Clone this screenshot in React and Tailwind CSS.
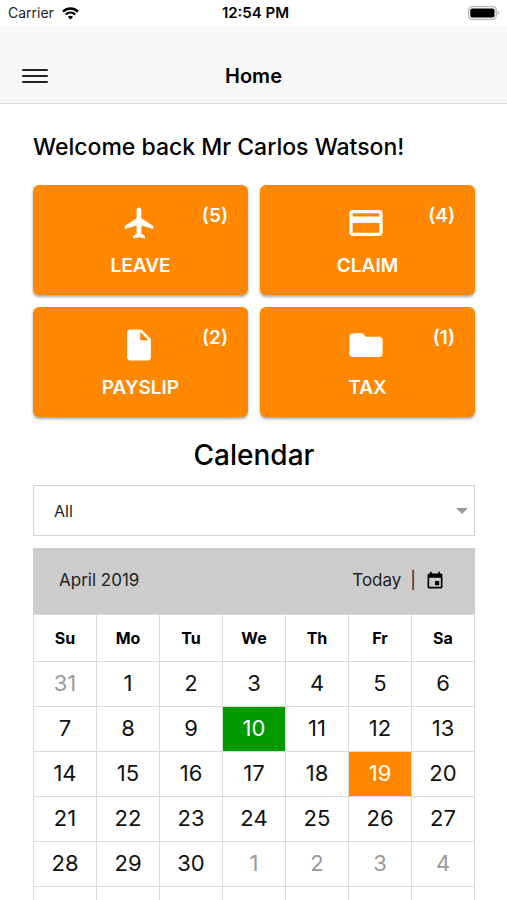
import { useState } from "react";
import { IoMdAirplane, IoMdCard, IoMdDocument, IoMdFolder } from "react-icons/io";
import { MdEvent } from "react-icons/md";

const TILES = [
  { label: "LEAVE", count: 5, icon: IoMdAirplane },
  { label: "CLAIM", count: 4, icon: IoMdCard },
  { label: "PAYSLIP", count: 2, icon: IoMdDocument },
  { label: "TAX", count: 1, icon: IoMdFolder },
];

const DAYS = ["Su", "Mo", "Tu", "We", "Th", "Fr", "Sa"];

// April 2019 starts on a Monday, so the grid starts on Sunday 31 March
const WEEKS = Array.from({ length: 6 }, (_, week) =>
  Array.from({ length: 7 }, (_, day) => {
    const n = week * 7 + day;
    if (n === 0) return { day: 31, outside: true };
    if (n > 30) return { day: n - 30, outside: true };
    return { day: n, outside: false };
  })
);

function cellStyle({ day, outside }) {
  if (outside) return "text-[#999999]";
  if (day === 10) return "bg-[#009900] text-white";
  if (day === 19) return "bg-[#ff8800] text-white";
  return "text-[#111111]";
}

function StatusBar() {
  return (
    <div className="grid h-[26px] shrink-0 grid-cols-3 items-center bg-white px-2 text-sm text-[#222222]">
      <div className="flex items-center gap-2">
        <span>Carrier</span>
        <svg viewBox="0 0 17 13" className="h-[13px] w-[17px]" fill="none" stroke="#000">
          <path d="M1 4.6c4.3-4.1 10.7-4.1 15 0" strokeWidth="2.4" />
          <path d="M3.7 7.5c2.8-2.6 6.8-2.6 9.6 0" strokeWidth="2.2" />
          <path d="M8.5 12.6 5.9 9.9c1.5-1.4 3.7-1.4 5.2 0z" fill="#000" stroke="none" />
        </svg>
      </div>
      <span className="pl-1 text-center text-[15px] font-semibold text-black">12:54 PM</span>
      <svg viewBox="0 0 32 14" className="h-[14px] w-8 justify-self-end">
        <rect x="1.6" y="0.7" width="27.6" height="12.6" rx="3.6" fill="#fff" stroke="#b5b5b5" strokeWidth="1.2" />
        <rect x="3.3" y="2.4" width="24.2" height="9.2" rx="1.8" fill="#000" />
        <path d="M30.6 5v4c1.5-.5 1.5-3.5 0-4z" fill="#999" />
      </svg>
    </div>
  );
}

function Tile({ label, count, icon: Icon }) {
  return (
    <button
      type="button"
      className="relative flex h-[110px] flex-col items-center rounded-md bg-[#ff8800] pt-[19px] text-[19px] leading-7 font-semibold text-white shadow-[0_2px_3px_rgba(0,0,0,0.35)]"
    >
      <Icon className="mr-1 size-[38px]" />
      <span className="mt-[10px]">{label}</span>
      <span className="absolute top-[17px] right-5">({count})</span>
    </button>
  );
}

export default function App() {
  const [filter, setFilter] = useState("all");

  return (
    <div className="flex h-screen flex-col overflow-hidden bg-white font-['Inter',sans-serif] text-black">
      <StatusBar />

      {/* Nav bar */}
      <header className="grid h-[78px] shrink-0 grid-cols-[1fr_auto_1fr] items-end border-b border-[#d9d9d9] bg-[#f7f7f7] px-[22px] pb-3">
        <button type="button" aria-label="Menu" className="flex h-[30px] w-[26px] flex-col justify-center gap-1">
          <span className="h-[2px] w-full rounded-full bg-[#222222]" />
          <span className="h-[2px] w-full rounded-full bg-[#222222]" />
          <span className="h-[2px] w-full rounded-full bg-[#222222]" />
        </button>
        <h1 className="text-xl leading-[30px] font-semibold">Home</h1>
      </header>

      <main className="flex-1 overflow-y-auto pt-[27px] pr-8 pl-[33px] [scrollbar-width:none]">
        <h2 className="text-[23px] leading-8 font-medium">Welcome back Mr Carlos Watson!</h2>

        <div className="mt-[22px] grid grid-cols-2 gap-3">
          {TILES.map((tile) => (
            <Tile key={tile.label} {...tile} />
          ))}
        </div>

        {/* Calendar */}
        <h2 className="mt-5 text-center text-[28px] leading-9 font-medium">Calendar</h2>

        <div className="relative mt-3">
          <select
            aria-label="Calendar filter"
            value={filter}
            onChange={(e) => setFilter(e.target.value)}
            className="block h-[51px] w-full appearance-none border border-[#d3d3d3] bg-white px-5 text-base text-[#222222]"
          >
            <option value="all">All</option>
            <option value="leave">Leave</option>
            <option value="holiday">Holiday</option>
          </select>
          <svg viewBox="0 0 12 6" className="pointer-events-none absolute top-[23px] right-[7px] h-[6px] w-3">
            <path d="M0 0h12L6 6z" fill="#999" />
          </svg>
        </div>

        <div className="mt-3 flex h-[66px] items-center bg-[#cccccc] pr-[30px] pl-[26px] text-[17px] text-[#222222]">
          <span className="flex-1">April 2019</span>
          <button type="button">Today</button>
          <span className="mx-[9px]">|</span>
          <button type="button" aria-label="Pick a date">
            <MdEvent className="size-5 text-black" />
          </button>
        </div>

        <table className="w-full table-fixed border-collapse text-center">
          <thead>
            <tr className="h-[47px]">
              {DAYS.map((day) => (
                <th key={day} className="border border-[#d9d9d9] text-base font-bold">
                  {day}
                </th>
              ))}
            </tr>
          </thead>
          <tbody>
            {WEEKS.map((week, i) => (
              <tr key={i} className="h-[45px]">
                {week.map((date, j) => (
                  <td key={j} className={`border border-[#d9d9d9] pb-[2px] text-[22px] leading-7 ${cellStyle(date)}`}>
                    {date.day}
                  </td>
                ))}
              </tr>
            ))}
          </tbody>
        </table>
      </main>
    </div>
  );
}
